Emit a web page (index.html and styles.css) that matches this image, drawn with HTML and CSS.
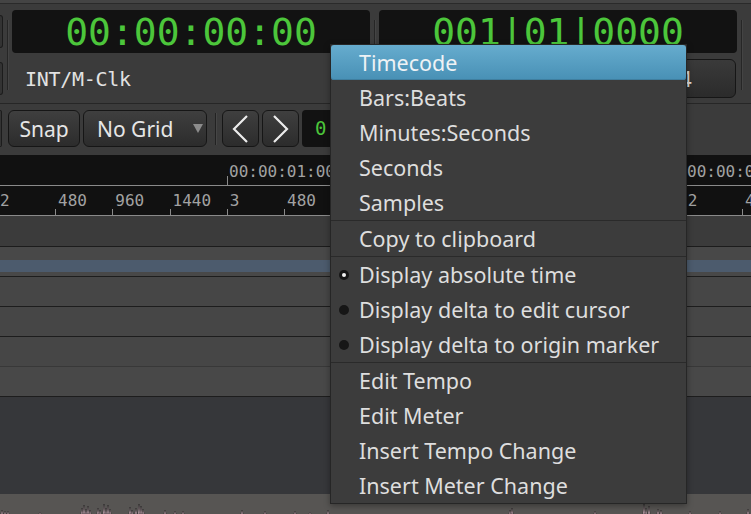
FILE: index.html
```html
<!DOCTYPE html>
<html>
<head>
<meta charset="utf-8">
<link rel="stylesheet" href="styles.css">
</head>
<body>
<div class="app">
  <div class="topline"></div>
  <div class="clocks">
    <div class="stub"><div class="stub-btn"></div><div class="stub-btn"></div></div>
    <div class="vsep"></div>
    <div class="clockcol">
      <div class="clock">00:00:00:00</div>
      <div class="clocksub">INT/M-Clk</div>
    </div>
    <div class="vsep vsep-mid"></div>
    <div class="clockcol">
      <div class="clock">001|01|0000</div>
      <div class="ctlbtn">4/4</div>
    </div>
    <div class="vsep"></div>
  </div>
  <div class="toolbar">
    <div class="tstub"></div>
    <div class="btn btn-snap">Snap</div>
    <div class="btn btn-grid">No Grid<span class="tri"></span></div>
    <div class="tsep"></div>
    <div class="btn btn-nav btn-prev"><svg width="35" height="35" viewBox="0 0 35 35"><path d="M24 5 L11 18 L24 31" fill="none" stroke="#ececec" stroke-width="2.2"/></svg></div>
    <div class="btn btn-nav btn-next"><svg width="35" height="35" viewBox="0 0 35 35"><path d="M11 5 L24 18 L11 31" fill="none" stroke="#ececec" stroke-width="2.2"/></svg></div>
    <div class="miniclock">0</div>
  </div>
  <div class="ruler">
    <div class="tcrow">
      <div class="tcspace"></div>
      <div class="tccell">00:00:01:00</div>
      <div class="tccell">00:00:02:00</div>
    </div>
    <div class="bbtrow">
      <div class="bcell first">2</div>
      <div class="bcell">480</div>
      <div class="bcell">960</div>
      <div class="bcell">1440</div>
      <div class="bcell">3</div>
      <div class="bcell">480</div>
      <div class="bcell">960</div>
      <div class="bcell">1440</div>
      <div class="bcell">4</div>
      <div class="bcell">480</div>
      <div class="bcell">960</div>
      <div class="bcell">1440</div>
      <div class="bcell">2</div>
      <div class="bcell">480</div>
    </div>
  </div>
  <div class="lane0"></div>
  <div class="track track1"><div class="sel"></div></div>
  <div class="track"></div>
  <div class="track"></div>
  <div class="track soft"></div>
  <div class="track track5"></div>
  <div class="empty"></div>
  <div class="wave">
    <svg width="751" height="20" viewBox="0 0 751 20">
      <path fill="#ffd9e8" stroke="#141414" stroke-width="0.5" d="M1 20 L2 16 L3 20 Z M4 20 L5 17 L6 20 Z M7 20 L8 17 L9 20 Z M39 20 L40 18 L41 20 Z M81 20 L82 14 L83 20 Z M83 20 L84 11 L85 20 Z M85 20 L86 15 L87 20 Z M87 20 L88 12 L89 20 Z M89 20 L90 16 L91 20 Z M97 20 L98 14 L99 20 Z M99 20 L100 16 L101 20 Z M103 20 L104 10 L105 20 Z M105 20 L106 14 L107 20 Z M107 20 L108 11 L109 20 Z M109 20 L110 15 L111 20 Z M129 20 L130 13 L131 20 Z M131 20 L132 16 L133 20 Z M135 20 L136 14 L137 20 Z M138 20 L139 10 L140 20 Z M140 20 L141 12 L142 20 Z M142 20 L143 15 L144 20 Z M164 20 L165 16 L166 20 Z M174 20 L175 17 L176 20 Z M182 20 L183 17 L184 20 Z M241 20 L242 16 L243 20 Z M264 20 L265 17 L266 20 Z M294 20 L295 17 L296 20 Z M309 20 L310 18 L311 20 Z M327 20 L328 16 L329 20 Z M509 20 L510 16 L511 20 Z M511 20 L512 14 L513 20 Z M594 20 L595 17 L596 20 Z M643 20 L644 10 L645 20 Z M645 20 L646 14 L647 20 Z M648 20 L649 12 L650 20 Z M657 20 L658 15 L659 20 Z M660 20 L661 16 L662 20 Z M689 20 L690 17 L691 20 Z M719 20 L720 17 L721 20 Z M747 20 L748 15 L749 20 Z"/>
    </svg>
  </div>

  <div class="menu">
    <div class="item active">Timecode</div>
    <div class="item">Bars:Beats</div>
    <div class="item">Minutes:Seconds</div>
    <div class="item">Seconds</div>
    <div class="item">Samples</div>
    <div class="msep"></div>
    <div class="item">Copy to clipboard</div>
    <div class="msep"></div>
    <div class="item radio checked">Display absolute time</div>
    <div class="item radio">Display delta to edit cursor</div>
    <div class="item radio">Display delta to origin marker</div>
    <div class="msep"></div>
    <div class="item">Edit Tempo</div>
    <div class="item">Edit Meter</div>
    <div class="item">Insert Tempo Change</div>
    <div class="item">Insert Meter Change</div>
  </div>
</div>
</body>
</html>
```
FILE: styles.css
```css
* { box-sizing: border-box; }
html, body { margin: 0; padding: 0; }
body {
  width: 751px;
  height: 514px;
  overflow: hidden;
  background: #3b3b3b;
  font-family: "Noto Sans", sans-serif;
}
.app {
  position: relative;
  width: 751px;
  height: 514px;
  overflow: hidden;
  display: flex;
  flex-direction: column;
}
.topline {
  flex: none;
  height: 4px;
  background: #444444;
  border-bottom: 1px solid #2a2a2a;
}
.clocks {
  flex: none;
  height: 99px;
  display: flex;
  align-items: flex-start;
  background: #3b3b3b;
}
.stub {
  width: 3px;
  display: flex;
  flex-direction: column;
  gap: 14px;
  padding-top: 11px;
}
.stub-btn {
  height: 33px;
  border: 1px solid #1c1c1c;
  border-left: none;
  border-radius: 0 4px 4px 0;
  background: #333333;
}
.vsep {
  width: 1px;
  height: 70px;
  margin-top: 16px;
  margin-left: 4px;
  background: #262626;
  box-shadow: 1px 0 0 #444;
}
.vsep-mid { margin-left: 4px; }
.clockcol {
  width: 358px;
  margin-left: 4px;
  padding-top: 6px;
  display: flex;
  flex-direction: column;
}
.clock {
  height: 43px;
  background: #121212;
  border-radius: 4px;
  display: flex;
  align-items: center;
  justify-content: center;
  color: #4cc63b;
  font-family: "DejaVu Sans Mono", monospace;
  font-size: 38px;
  line-height: 1;
  padding-top: 1px;
}
.clocksub {
  margin-top: 16px;
  padding-left: 13px;
  font-family: "DejaVu Sans Mono", monospace;
  font-size: 20px;
  line-height: 20px;
  letter-spacing: -0.3px;
  color: #e2e2e2;
}
.ctlbtn {
  align-self: flex-end;
  width: 140px;
  height: 39px;
  margin-top: 6px;
  margin-right: 1px;
  border: 1px solid #161616;
  border-radius: 6px;
  background: linear-gradient(#3a3a3a, #2b2b2b);
  color: #dddddd;
  font-size: 21px;
  display: flex;
  align-items: center;
  padding-left: 63px;
}
.toolbar {
  flex: none;
  height: 52px;
  border-top: 1px solid #262626;
  display: flex;
  align-items: flex-start;
  padding-top: 6px;
}
.tstub {
  width: 2px;
  height: 37px;
  border: 1px solid #1c1c1c;
  border-left: none;
  border-radius: 0 4px 4px 0;
  background: #333;
}
.btn {
  height: 37px;
  border: 1px solid #161616;
  border-radius: 6px;
  background: linear-gradient(#3f3f3f, #2c2c2c);
  color: #e6e6e6;
  font-size: 21px;
  display: flex;
  align-items: center;
}
.btn-snap {
  width: 72px;
  margin-left: 6px;
  justify-content: center;
}
.btn-grid {
  width: 124px;
  margin-left: 3px;
  padding-left: 13px;
}
.tri {
  margin-left: auto;
  margin-right: 3px;
  width: 0;
  height: 0;
  border-left: 5px solid transparent;
  border-right: 5px solid transparent;
  border-top: 9px solid #8c8c8c;
}
.tsep {
  width: 1px;
  height: 32px;
  margin-top: 3px;
  margin-left: 8px;
  background: #222;
  box-shadow: 1px 0 0 #464646;
}
.btn-nav {
  width: 37px;
  justify-content: center;
}
.btn-prev { margin-left: 6px; }
.btn-next { margin-left: 3px; }
.miniclock {
  width: 100px;
  height: 37px;
  margin-left: 3px;
  background: #121212;
  border-radius: 4px;
  color: #4cc63b;
  font-family: "DejaVu Sans Mono", monospace;
  font-size: 19px;
  line-height: 37px;
  padding-left: 13px;
}
.ruler {
  flex: none;
  height: 61px;
  background: #111111;
  font-family: "DejaVu Sans Mono", monospace;
  font-size: 16px;
  color: #a2a2a2;
}
.tcrow {
  height: 31px;
  border-bottom: 1px solid #8a8a8a;
  display: flex;
  line-height: 31px;
  padding-top: 1px;
  white-space: nowrap;
}
.tcspace { width: 227px; flex: none; }
.tccell {
  flex: none;
  width: 458px;
  position: relative;
  padding-left: 2px;
}
.tccell::before {
  content: "";
  position: absolute;
  left: 0;
  bottom: 0;
  width: 1px;
  height: 9px;
  background: #8a8a8a;
}
.bbtrow {
  height: 30px;
  border-bottom: 1px solid #8a8a8a;
  display: flex;
  line-height: 29px;
  white-space: nowrap;
}
.bcell {
  flex: none;
  width: 57.25px;
  position: relative;
  padding-left: 3px;
}
.bcell::before {
  content: "";
  position: absolute;
  left: 0;
  bottom: 0;
  width: 1px;
  height: 6px;
  background: #8a8a8a;
}
.bcell.first { width: 55px; padding-left: 0; }
.bcell.first::before { display: none; }
.lane0 {
  flex: none;
  height: 31px;
  background: #3b3b3b;
  border-bottom: 1px solid #1c1c1c;
}
.track {
  flex: none;
  height: 30px;
  background: #464646;
  border-bottom: 1px solid #1d1d1d;
}
.track1 {
  background: #484848;
  padding-top: 13px;
}
.sel {
  height: 12px;
  background: #4c5b6d;
}
.track.soft { border-bottom-color: #383838; }
.track5 { background: #484848; }
.empty {
  flex: none;
  height: 97px;
  background: #36373a;
}
.wave {
  flex: none;
  height: 20px;
  background: #575553;
}
.wave svg { display: block; }
.menu {
  position: absolute;
  left: 330px;
  top: 44px;
  width: 357px;
  background: #3c3c3c;
  border: 1px solid #262626;
  box-shadow: 0 2px 6px rgba(0,0,0,0.35);
}
.item {
  position: relative;
  height: 35px;
  line-height: 35px;
  padding-left: 28px;
  font-size: 21.5px;
  color: #dedede;
  white-space: nowrap;
}
.item.active {
  background: linear-gradient(#66acce, #4890b5);
  border-radius: 3px;
  color: #eef2f5;
  box-shadow: inset 0 -1px 0 #3f7e9f;
}
.msep {
  height: 1px;
  background: #2a2a2a;
}
.radio::before {
  content: "";
  position: absolute;
  left: 8px;
  top: 50%;
  width: 10px;
  height: 10px;
  margin-top: -5px;
  border-radius: 50%;
  background: #161616;
}
.radio.checked::after {
  content: "";
  position: absolute;
  left: 11px;
  top: 50%;
  width: 4px;
  height: 4px;
  margin-top: -2px;
  border-radius: 50%;
  background: #f2f2f2;
}
```
